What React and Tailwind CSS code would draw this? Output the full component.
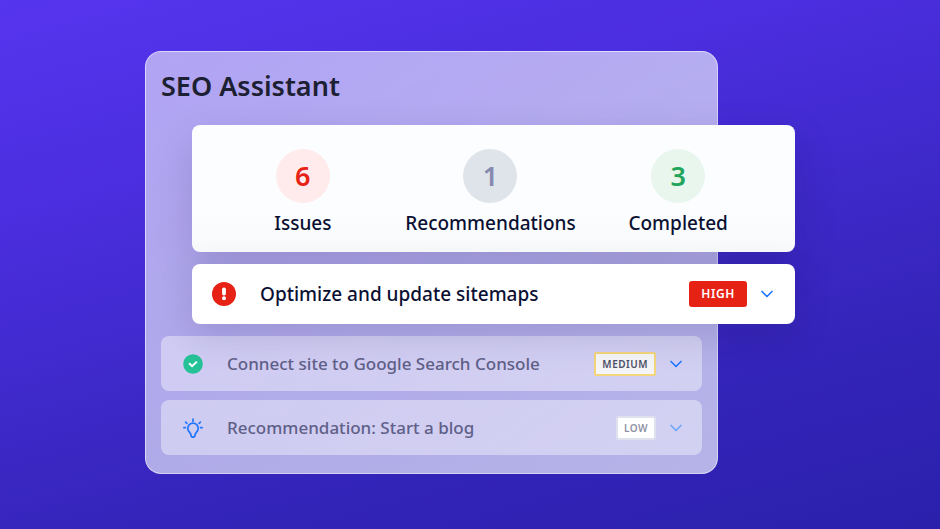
import { ChevronDown } from "lucide-react"

const STATS = [
  { label: "Issues", count: 6, tone: "bg-[#ffebeb] text-[#e62214]" },
  { label: "Recommendations", count: 1, tone: "bg-[#dfe4eb] text-[#868aae]" },
  { label: "Completed", count: 3, tone: "bg-[#e8f6ed] text-[#22a55b]" },
]

const TASKS = [
  {
    title: "Connect site to Google Search Console",
    icon: CheckIcon,
    priority: "MEDIUM",
    badge: "border-[#f3d57c] bg-[#f5f5f7] text-[#4d5068]",
    chevron: "text-[#2176ff]",
  },
  {
    title: "Recommendation: Start a blog",
    icon: BulbIcon,
    priority: "LOW",
    badge: "border-[#dfe2ee] bg-white text-[#8f93a6]",
    chevron: "text-[#6ea6fb]",
  },
]

function AlertIcon() {
  return (
    <svg viewBox="0 0 24 24" className="size-6 shrink-0" aria-hidden="true">
      <circle cx="12" cy="12" r="12" fill="#e62214" />
      <rect x="10.1" y="5.4" width="3.8" height="8" rx="1.7" fill="#fff" />
      <circle cx="12" cy="16.2" r="2" fill="#fff" />
    </svg>
  )
}

function CheckIcon() {
  return (
    <svg viewBox="0 0 20 20" fill="none" className="size-5 shrink-0" aria-hidden="true">
      <circle cx="10" cy="10" r="9.8" fill="#25c197" />
      <path d="m6.1 9.3 3 2.9 4.8-4.6" stroke="#fff" strokeWidth="2" />
    </svg>
  )
}

function BulbIcon() {
  return (
    <svg
      viewBox="0 0 20 20"
      fill="none"
      stroke="#2176ff"
      strokeWidth="1.7"
      strokeLinecap="round"
      strokeLinejoin="round"
      className="size-5 shrink-0"
      aria-hidden="true"
    >
      <path d="M8 17.2c0 1.2.9 2 2 2s2-.8 2-2c0-1.3.9-2.3 1.7-3.3a5.2 5.2 0 1 0-7.4 0C7.1 14.9 8 15.9 8 17.2Z" />
      <path d="M10 1v2.2M.9 9.7h1.5M17.6 9.7h1.5M2.6 4.1l1.3 1.2M17.4 4.1l-1.3 1.2" />
    </svg>
  )
}

function Stat({ label, count, tone }) {
  return (
    <div className="flex flex-col-reverse items-center gap-1.5">
      <dt className="text-[19px] leading-7 font-medium text-[#0b1033]">{label}</dt>
      <dd className={`flex size-[54px] items-center justify-center rounded-full text-[27px] font-semibold ${tone}`}>
        {count}
      </dd>
    </div>
  )
}

function TaskRow({ title, icon: Icon, priority, badge, chevron }) {
  return (
    <button
      type="button"
      className="flex h-[55px] w-full items-center rounded-lg bg-white/40 pr-4 pl-[22px] text-left"
    >
      <Icon />
      <span className="ml-6 flex-1 text-[17px] leading-6 font-medium text-[#5f6088]">{title}</span>
      <span
        className={`rounded-xs border-2 px-1.5 text-[10px] leading-5 font-semibold tracking-wider ${badge}`}
      >
        {priority}
      </span>
      <ChevronDown className={`ml-2.5 size-5 shrink-0 ${chevron}`} strokeWidth={2} aria-hidden />
    </button>
  )
}

export default function App() {
  return (
    <main className="min-h-screen bg-linear-[165deg,#5635ee_0%,#4b2edf_28%,#3525bb_70%,#2a20ac_100%] px-6 py-[51px] font-['Noto_Sans',sans-serif]">
      <div className="mx-auto max-w-[650px] pr-[77px]">
        <section className="rounded-2xl border border-white/50 bg-linear-to-br from-[#e9e8fa]/63 to-[#f0f2ff]/70 px-[15px] pt-4 pb-[18px]">
          <h1 className="text-[27px] leading-9 font-semibold text-[#1d1f33]">SEO Assistant</h1>

          <div className="relative z-10 mt-[21px] -mr-[93px] ml-[31px] space-y-3">
            <dl className="grid grid-cols-3 rounded-lg bg-linear-to-b from-[#fcfdff] from-70% to-[#f7f9fa] pt-6 pr-[23px] pb-[15px] pl-[17px] shadow-[0_16px_40px_rgba(30,20,70,0.17)]">
              {STATS.map((stat) => (
                <Stat key={stat.label} {...stat} />
              ))}
            </dl>

            <button
              type="button"
              className="flex h-[60px] w-full items-center rounded-lg bg-white pr-[18px] pl-5 text-left shadow-[0_12px_36px_rgba(30,20,70,0.15)]"
            >
              <AlertIcon />
              <span className="ml-6 flex-1 text-[19px] leading-7 font-medium text-[#0b1033]">Optimize and update sitemaps</span>
              <span className="rounded-[3px] bg-[#e62214] px-3 text-xs leading-[26px] font-semibold tracking-wider text-white">
                HIGH
              </span>
              <ChevronDown className="ml-2.5 size-5 shrink-0 text-[#2176ff]" strokeWidth={2} aria-hidden />
            </button>
          </div>

          <div className="mt-3 space-y-[9px]">
            {TASKS.map((task) => (
              <TaskRow key={task.title} {...task} />
            ))}
          </div>
        </section>
      </div>
    </main>
  )
}
